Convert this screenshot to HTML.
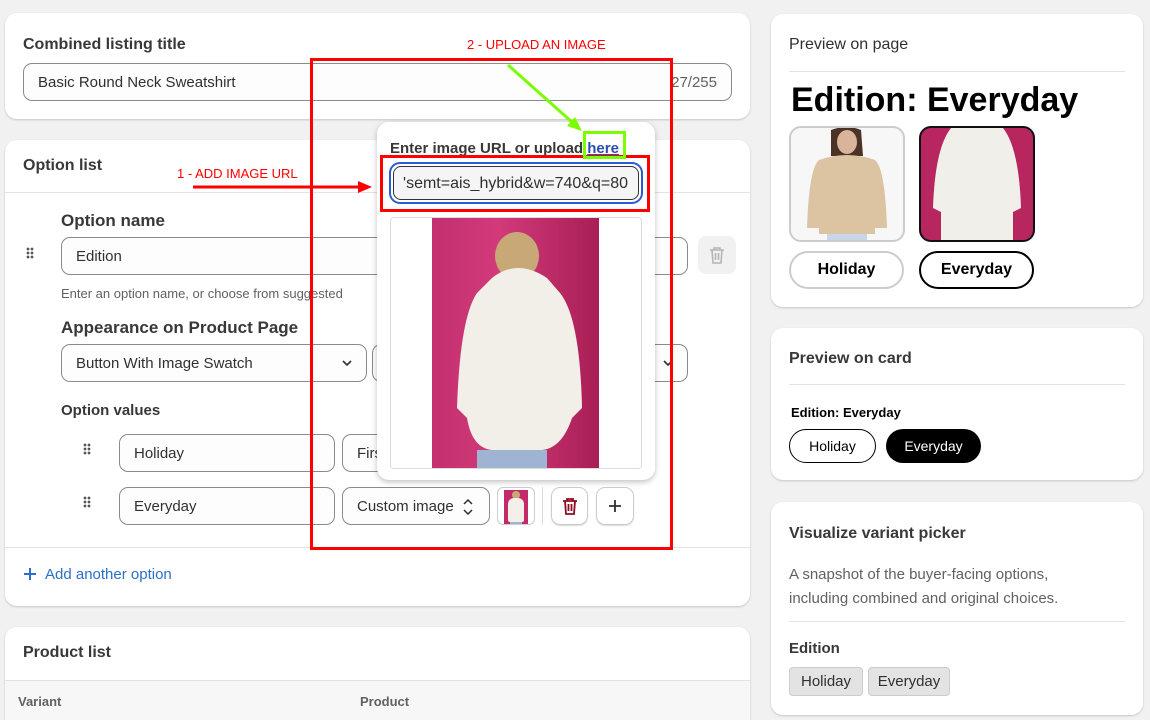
<!DOCTYPE html>
<html><head><meta charset="utf-8"><style>
*{box-sizing:border-box;margin:0;padding:0}
html,body{width:1150px;height:720px;overflow:hidden}
body{background:#f1f1f1;font-family:"Liberation Sans",sans-serif;color:#303030;position:relative}
.a{position:absolute}
.card{position:absolute;background:#fff;border-radius:12px;box-shadow:0 1px 2px rgba(0,0,0,.18)}
.inp{position:absolute;border:1px solid #8a8a8a;border-radius:9px;background:#fdfdfd;font-size:15px;color:#303030;padding-left:14px;display:flex;align-items:center}
.t{position:absolute;white-space:nowrap}
.b{font-weight:bold;color:#383838}
.hr{position:absolute;height:1px;background:#e3e3e3}
.grip{position:absolute;width:8px;height:12px;background:radial-gradient(circle,#555 1.2px,transparent 1.6px) 0 0/4px 4px}
</style></head><body>

<!-- Card 1 -->
<div class="card" style="left:5px;top:13px;width:745px;height:106px"></div>
<div class="t b" style="left:23px;top:36px;font-size:16px">Combined listing title</div>
<div class="inp" style="left:23px;top:63px;width:709px;height:38px">Basic Round Neck Sweatshirt<span style="position:absolute;right:14px;color:#616161">27/255</span></div>

<!-- Card 2 -->
<div class="card" style="left:5px;top:140px;width:745px;height:466px"></div>
<div class="t b" style="left:23px;top:157px;font-size:16px">Option list</div>
<div class="hr" style="left:5px;top:192px;width:745px"></div>
<div class="t b" style="left:61px;top:211px;font-size:17px">Option name</div>
<div class="grip" style="left:26px;top:247px"></div>
<div class="inp" style="left:61px;top:237px;width:627px;height:38px">Edition</div>
<div class="a" style="left:698px;top:236px;width:38px;height:38px;border-radius:8px;background:#f1f1f1"></div>
<svg class="a" style="left:709px;top:246px" width="16" height="18" viewBox="0 0 16 18" fill="none" stroke="#b5b5b5" stroke-width="1.6"><path d="M1 4h14M5 4V2h6v2M3 4l1 13h8l1-13M6.5 7v7M9.5 7v7"/></svg>
<div class="t" style="left:61px;top:286px;font-size:13px;color:#616161">Enter an option name, or choose from suggested</div>
<div class="t b" style="left:61px;top:318px;font-size:17px">Appearance on Product Page</div>
<div class="inp" style="left:61px;top:344px;width:306px;height:38px">Button With Image Swatch<svg style="position:absolute;right:14px;top:15px" width="10" height="7" viewBox="0 0 10 7" fill="none" stroke="#303030" stroke-width="1.6"><path d="M1 1l4 4 4-4"/></svg></div>
<div class="inp" style="left:372px;top:344px;width:316px;height:38px"><svg style="position:absolute;right:14px;top:15px" width="10" height="7" viewBox="0 0 10 7" fill="none" stroke="#303030" stroke-width="1.6"><path d="M1 1l4 4 4-4"/></svg></div>
<div class="t b" style="left:61px;top:402px;font-size:15px">Option values</div>
<div class="grip" style="left:83px;top:443px"></div>
<div class="inp" style="left:119px;top:434px;width:216px;height:38px">Holiday</div>
<div class="inp" style="left:342px;top:434px;width:150px;height:38px">First</div>
<div class="grip" style="left:83px;top:496px"></div>
<div class="inp" style="left:119px;top:487px;width:216px;height:38px">Everyday</div>
<div class="inp" style="left:342px;top:487px;width:148px;height:38px">Custom image<svg style="position:absolute;right:16px;top:11px" width="10" height="16" viewBox="0 0 10 16" fill="none" stroke="#303030" stroke-width="1.5"><path d="M1 5l4-4 4 4M1 11l4 4 4-4"/></svg></div>
<div class="a" style="left:497px;top:487px;width:38px;height:38px;border:1px solid #ccc;border-radius:6px;overflow:hidden;padding:2px 6px"><div style="width:24px;height:36px;background:#c42a6a;position:relative"><div style="position:absolute;left:8px;top:1px;width:8px;height:8px;border-radius:50%;background:#c9a878"></div><div style="position:absolute;left:4px;top:8px;width:16px;height:24px;background:#f3f0ea;border-radius:6px 6px 2px 2px"></div><div style="position:absolute;left:6px;top:32px;width:12px;height:4px;background:#9fb4d2"></div></div></div>
<div class="a" style="left:542px;top:487px;width:1px;height:38px;background:#ddd"></div>
<div class="a" style="left:551px;top:487px;width:37px;height:38px;border:1px solid #ccc;border-radius:9px;box-shadow:0 1px 1px rgba(0,0,0,.15)"></div>
<svg class="a" style="left:562px;top:497px" width="16" height="18" viewBox="0 0 16 18" fill="none" stroke="#8e0b21" stroke-width="1.8"><path d="M1 4h14M5 4V2h6v2M3 4l1 13h8l1-13M6.5 7v7M9.5 7v7"/></svg>
<div class="a" style="left:596px;top:487px;width:38px;height:38px;border:1px solid #ccc;border-radius:9px;box-shadow:0 1px 1px rgba(0,0,0,.15)"></div>
<svg class="a" style="left:608px;top:499px" width="14" height="14" viewBox="0 0 14 14" stroke="#303030" stroke-width="1.8"><path d="M7 1v12M1 7h12"/></svg>
<div class="hr" style="left:5px;top:547px;width:745px"></div>
<svg class="a" style="left:23px;top:567px" width="14" height="14" viewBox="0 0 14 14" stroke="#2c6ecb" stroke-width="2"><path d="M7 1v12M1 7h12"/></svg>
<div class="t" style="left:45px;top:566px;font-size:15px;color:#2c6ecb">Add another option</div>

<!-- Card 3 -->
<div class="card" style="left:5px;top:627px;width:745px;height:110px"></div>
<div class="t b" style="left:23px;top:644px;font-size:16px">Product list</div>
<div class="a" style="left:5px;top:680px;width:745px;height:40px;background:#f7f7f7;border-top:1px solid #e3e3e3"></div>
<div class="t" style="left:18px;top:694px;font-size:13px;font-weight:bold;color:#616161">Variant</div>
<div class="t" style="left:360px;top:694px;font-size:13px;font-weight:bold;color:#616161">Product</div>

<!-- Right card 1 -->
<div class="card" style="left:771px;top:14px;width:372px;height:293px"></div>
<div class="t" style="left:789px;top:36px;font-size:16px">Preview on page</div>
<div class="hr" style="left:789px;top:71px;width:336px"></div>
<div class="t" style="left:791px;top:81px;font-size:34px;font-weight:bold;color:#000">Edition: Everyday</div>
<div class="a" style="left:789px;top:126px;width:116px;height:116px;border:2px solid #ccc;border-radius:12px;background:#f7f7f7;overflow:hidden">
<svg width="112" height="112" viewBox="0 0 112 112"><path d="M40 2 Q56 -4 70 2 L72 28 L40 28 Z" fill="#4a3226"/><ellipse cx="56" cy="14" rx="10" ry="12" fill="#d9b49a"/><path d="M28 32 Q56 22 84 32 Q94 40 96 100 L84 100 L84 106 L28 106 L28 100 L16 100 Q18 40 28 32 Z" fill="#dcc3a2"/><rect x="36" y="106" width="40" height="6" fill="#c9d6e6"/></svg></div>
<div class="a" style="left:919px;top:126px;width:116px;height:116px;border:2px solid #111;border-radius:12px;background:#b8265f;overflow:hidden">
<svg width="112" height="112" viewBox="0 0 112 112"><path d="M30 0 L82 0 Q98 20 100 80 L92 84 L92 112 L20 112 L20 84 L12 80 Q14 20 30 0 Z" fill="#f1efe9"/></svg></div>
<div class="a" style="left:789px;top:251px;width:115px;height:38px;border:2px solid #ccc;border-radius:20px;text-align:center;line-height:34px;font-size:16px;font-weight:bold;color:#000">Holiday</div>
<div class="a" style="left:919px;top:251px;width:115px;height:38px;border:2px solid #000;border-radius:20px;text-align:center;line-height:34px;font-size:16px;font-weight:bold;color:#000">Everyday</div>

<!-- Right card 2 -->
<div class="card" style="left:771px;top:328px;width:372px;height:152px"></div>
<div class="t b" style="left:789px;top:350px;font-size:16px">Preview on card</div>
<div class="hr" style="left:789px;top:384px;width:336px"></div>
<div class="t" style="left:791px;top:405px;font-size:13px;font-weight:bold;color:#000">Edition: Everyday</div>
<div class="a" style="left:789px;top:429px;width:87px;height:34px;border:1px solid #000;border-radius:17px;text-align:center;line-height:32px;font-size:14px;color:#000">Holiday</div>
<div class="a" style="left:886px;top:429px;width:95px;height:34px;background:#000;border-radius:17px;text-align:center;line-height:34px;font-size:14px;color:#fff">Everyday</div>

<!-- Right card 3 -->
<div class="card" style="left:771px;top:502px;width:372px;height:213px"></div>
<div class="t b" style="left:789px;top:525px;font-size:16px">Visualize variant picker</div>
<div class="t" style="left:789px;top:563px;font-size:15px;color:#616161;line-height:24px">A snapshot of the buyer-facing options,<br>including combined and original choices.</div>
<div class="hr" style="left:789px;top:621px;width:336px"></div>
<div class="t b" style="left:789px;top:640px;font-size:15px">Edition</div>
<div class="a" style="left:789px;top:667px;width:74px;height:29px;background:#e3e3e3;border:1px solid #ccc;border-radius:4px;text-align:center;line-height:27px;font-size:15px">Holiday</div>
<div class="a" style="left:868px;top:667px;width:82px;height:29px;background:#e3e3e3;border:1px solid #ccc;border-radius:4px;text-align:center;line-height:27px;font-size:15px">Everyday</div>

<!-- Popover -->
<div class="a" style="left:377px;top:122px;width:278px;height:358px;background:#fff;border-radius:12px;box-shadow:0 2px 6px rgba(0,0,0,.25)"></div>
<div class="t b" style="left:390px;top:140px;font-size:15px">Enter image URL or upload <span style="color:#2a4fb0;text-decoration:underline">here</span></div>
<div class="a" style="left:389px;top:162px;width:254px;height:42px;border:2px solid #2c5bd6;border-radius:11px;padding:2px"><div style="width:100%;height:100%;border:1px solid #333;border-radius:8px;background:#f5f5f5;font-size:16px;line-height:34px;text-align:right;padding-right:10px;color:#303030">'semt=ais_hybrid&amp;w=740&amp;q=80</div></div>
<div class="a" style="left:390px;top:217px;width:252px;height:252px;border:1px solid #ddd;border-radius:4px;background:#fff"></div>
<div class="a" style="left:432px;top:218px;width:167px;height:250px;background:linear-gradient(90deg,#c3306f,#d23a7a 40%,#a81e55);overflow:hidden">
<svg width="167" height="250" viewBox="0 0 167 250"><ellipse cx="85" cy="38" rx="22" ry="24" fill="#c9a878"/><path d="M60 60 Q85 40 115 60 L128 75 Q148 100 150 190 L140 200 Q130 230 110 232 L60 232 Q40 230 35 200 L25 190 Q28 100 45 75 Z" fill="#f2efe8"/><rect x="45" y="232" width="70" height="18" fill="#9fb4d2"/></svg></div>

<!-- Annotations -->
<div class="a" style="left:310px;top:58px;width:363px;height:492px;border:3px solid #f00"></div>
<div class="a" style="left:380px;top:155px;width:270px;height:57px;border:3px solid #f00"></div>
<div class="a" style="left:583px;top:131px;width:43px;height:28px;border:3px solid #7cfc00"></div>
<div class="t" style="left:177px;top:166px;font-size:13px;color:#f00">1 - ADD IMAGE URL</div>
<div class="t" style="left:467px;top:37px;font-size:13px;color:#f00">2 - UPLOAD AN IMAGE</div>
<svg class="a" style="left:0;top:0" width="1150" height="720"><line x1="193" y1="187" x2="360" y2="187" stroke="#f00" stroke-width="3"/><path d="M372 187 L358 181 L358 193 Z" fill="#f00"/><line x1="508" y1="65" x2="573" y2="123" stroke="#7cfc00" stroke-width="3"/><path d="M582 131 L567 126 L575 117 Z" fill="#7cfc00"/></svg>
</body></html>
